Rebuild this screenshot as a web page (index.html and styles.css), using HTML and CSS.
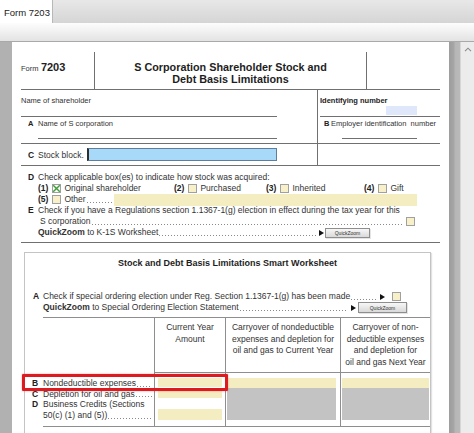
FILE: index.html
```html
<!DOCTYPE html>
<html>
<head>
<meta charset="utf-8">
<title>Form 7203</title>
<link rel="stylesheet" href="styles.css">
</head>
<body>
<div class="app">
  <div class="tabbar"><div class="tab">Form 7203</div></div>
  <div class="band"></div>
  <div class="main">
    <div class="lstrip"></div>
    <div class="page">
      <div class="hdr">
        <div class="hdr-form"><span class="hdr-small">Form</span> <span class="hdr-num">7203</span></div>
        <div class="hdr-title">S Corporation Shareholder Stock and<br>Debt Basis Limitations</div>
        <div class="hdr-right"></div>
      </div>
      <div class="sec1">
        <div class="s1-left">
          <div class="f-name">Name of shareholder</div>
          <div class="f-corp">
            <div class="lbl"><span class="ltr">A</span>Name of S corporation</div>
            <div class="uline corp-line"></div>
          </div>
        </div>
        <div class="s1-right">
          <div class="f-id"><b>Identifying number</b><span class="idfield"></span></div>
          <div class="f-ein">
            <div class="lbl"><span class="ltr ltr-b">B</span>Employer identification&nbsp; number</div>
            <div class="uline ein-line"></div>
          </div>
        </div>
      </div>
      <div class="sec2">
        <div class="s2-left"><span class="ltr">C</span><span class="stock-lbl">Stock block.</span><span class="stockfield"></span></div>
        <div class="s2-right"></div>
      </div>
      <div class="sec3">
        <div class="row ind1"><span class="ltr">D</span>Check applicable box(es) to indicate how stock was acquired:</div>
        <div class="row ind2">
          <div class="opt opt1"><b>(1)</b><span class="cb cb-x"><svg width="9" height="9" viewBox="0 0 9 9"><path d="M1.2 1.2 L7.8 7.8 M7.8 1.2 L1.2 7.8" stroke="#3d9e3d" stroke-width="1.4" fill="none"/></svg></span>Original shareholder</div>
          <div class="opt opt2"><b>(2)</b><span class="cb"></span>Purchased</div>
          <div class="opt opt3"><b>(3)</b><span class="cb"></span>Inherited</div>
          <div class="opt"><b>(4)</b><span class="cb"></span>Gift</div>
        </div>
        <div class="row ind2">
          <div class="opt opt5"><b>(5)</b><span class="cb"></span>Other<span class="dots"></span></div>
          <span class="yfield other-field"></span>
        </div>
        <div class="row ind1"><span class="ltr">E</span>Check if you have a Regulations section 1.1367-1(g) election in effect during the tax year for this</div>
        <div class="row ind3">S corporation<span class="dots"></span><span class="cb cb-e"></span></div>
        <div class="row ind2"><b>QuickZoom</b>&nbsp;to K-1S Worksheet<span class="dots"></span><span class="arrow"></span><span class="qbtn qbtn1">QuickZoom</span></div>
      </div>
      <div class="ws">
        <div class="ws-title">Stock and Debt Basis Limitations Smart Worksheet</div>
        <div class="row ws-a"><span class="ltr">A</span>Check if special ordering election under Reg. Section 1.1367-1(g) has been made<span class="dots"></span><span class="arrow"></span><span class="cb cb-a"></span></div>
        <div class="row ws-q"><b>QuickZoom</b>&nbsp;to Special Ordering Election Statement<span class="dots"></span><span class="arrow"></span><span class="qbtn qbtn2">QuickZoom</span></div>
        <div class="tbl">
          <div class="th th0"></div>
          <div class="th">Current Year<br>Amount</div>
          <div class="th">Carryover of nondeductible<br>expenses and depletion for<br>oil and gas to Current Year</div>
          <div class="th">Carryover of non-<br>deductible expenses<br>and depletion for<br>oil and gas Next Year</div>
          <div class="td td0">
            <div class="trow"><span class="ltr ltr-neg">B</span>Nondeductible expenses<span class="dots"></span></div>
            <div class="trow"><span class="ltr ltr-neg">C</span>Depletion for oil and gas<span class="dots"></span></div>
            <div class="trow"><span class="ltr ltr-neg">D</span>Business Credits (Sections</div>
            <div class="trow">50(c) (1) and (5))<span class="dots"></span></div>
          </div>
          <div class="td td1"><span class="yf yf-b"></span><span class="yf yf-c"></span><span class="yf yf-d"></span></div>
          <div class="td td2"><span class="yf yf-top"></span><span class="gray"></span></div>
          <div class="td td3"><span class="yf yf-top"></span><span class="gray"></span></div>
        </div>
      </div>
    </div>
    <div class="rgray"></div>
    <div class="scroll"><svg class="uparrow" width="8" height="5" viewBox="0 0 8 5"><polyline points="1,4.2 4,1.2 7,4.2" fill="none" stroke="#8a8a8a" stroke-width="1.1"/></svg></div>
  </div>
  <div class="redbox"></div>
</div>
</body>
</html>
```

FILE: styles.css
```css
* { box-sizing: border-box; margin: 0; padding: 0; }
html, body { width: 474px; height: 433px; overflow: hidden; background: #fff; }
body { font-family: "Liberation Sans", Arial, sans-serif; font-size: 8.5px; color: #333; }

.app { position: relative; width: 474px; height: 433px; display: flex; flex-direction: column; overflow: hidden; }

.tabbar { height: 23px; flex: none; display: flex; background: linear-gradient(#e8e8e8, #d5d5d5); }
.tab { width: 53px; background: #fff; border-right: 1px solid #b8b8b8; font-size: 9.5px; line-height: 25px; padding-left: 4px; color: #1a1a1a; white-space: nowrap; }
.band { height: 19px; flex: none; background: linear-gradient(#fdfdfd, #e3e3e3); border-bottom: 1px solid #a9a9a9; }

.main { flex: 1; display: flex; min-height: 0; }
.lstrip { width: 12px; flex: none; background: #b1b1b1; }
.page { width: 437px; flex: none; background: #fff; padding: 10px 9px 0; }
.rgray { width: 11px; flex: none; background: linear-gradient(to right, #9d9d9d 0, #a6a6a6 5px, #b6b6b6 6px, #b9b9b9 100%); }
.scroll { width: 14px; flex: none; background: #ececec; border-left: 1px solid #d6d6d6; display: flex; justify-content: center; align-items: flex-start; padding-top: 5px; }

/* header */
.hdr { display: flex; height: 38px; border-bottom: 1px solid #707070; }
.hdr-form { width: 74px; border-right: 1px solid #707070; padding-top: 8px; line-height: 14px; white-space: nowrap; }
.hdr-small { font-size: 7.5px; }
.hdr-num { font-size: 11px; font-weight: bold; color: #1e1e1e; }
.hdr-title { width: 272px; border-right: 1px solid #707070; text-align: center; font-weight: bold; font-size: 10.8px; line-height: 12px; padding-top: 9px; color: #1e1e1e; white-space: nowrap; }
.hdr-right { flex: 1; }

.ltr { display: inline-block; width: 10px; font-weight: bold; flex: none; color: #222; }

/* section 1 */
.sec1 { display: flex; height: 54px; border-bottom: 1px solid #707070; }
.s1-left { width: 297px; border-right: 1px solid #707070; }
.f-name { width: 256px; height: 27px; border-bottom: 1px solid #707070; font-size: 7.5px; line-height: 10px; padding-top: 6px; }
.f-corp, .f-ein { padding-top: 1px; font-size: 7.5px; }
.lbl { line-height: 11px; height: 11px; display: flex; align-items: center; white-space: nowrap; }
.f-corp .lbl { padding-left: 7px; }
.uline { height: 1px; background: #707070; margin-top: 9px; }
.corp-line { margin-left: 17px; width: 239px; }
.s1-right { flex: 1; }
.f-id { height: 27px; margin-left: 2px; border-bottom: 1px solid #707070; padding-top: 6px; display: flex; flex-direction: column; }
.f-id b { font-size: 7.5px; line-height: 10px; white-space: nowrap; color: #222; }
.idfield { align-self: flex-end; margin-right: 23px; width: 31px; height: 9px; background: #dfe8fb; }
.f-ein .lbl { padding-left: 6px; }
.ltr-b { width: 7px; }
.ein-line { margin-left: 24px; width: 75px; }

/* section 2 */
.sec2 { display: flex; height: 22px; border-bottom: 1px solid #707070; }
.s2-left { width: 297px; border-right: 1px solid #707070; display: flex; align-items: center; padding-left: 7px; white-space: nowrap; }
.stock-lbl { width: 49px; flex: none; }
.stockfield { width: 190px; height: 13px; background: #a9d9f9; border: 1px solid #5f7e9e; border-left: 2px solid #2e2e2e; }
.s2-right { flex: 1; }

/* section 3 */
.sec3 { height: 77px; border-bottom: 1px solid #707070; padding-top: 6px; }
.row { height: 11px; line-height: 11px; display: flex; align-items: center; white-space: nowrap; }
.ind1 { padding-left: 7px; }
.ind2 { padding-left: 17px; }
.ind3 { padding-left: 19px; }
.opt { display: flex; align-items: center; flex: none; }
.opt b { color: #222; }
.opt1 { width: 136px; }
.opt2 { width: 92px; }
.opt3 { width: 98px; }
.opt5 { width: 76px; align-self: stretch; }
.cb { display: inline-block; flex: none; width: 9px; height: 9px; border: 1px solid #a0a0a0; background: #f7f0c9; margin: 0 3px 0 4px; }
.cb-x { background: #fbfbf3; }
.cb-x svg { display: block; margin: -1px 0 0 -1px; }
.yfield { display: block; flex: none; height: 12px; background: #f5edc2; }
.other-field { width: 303px; }
.cb-e { margin: 0 25px 0 2px; }

.dots { flex: 1; align-self: flex-end; height: 1px; margin: 0 2px 2px 1px; background-image: linear-gradient(to right, #8a8a8a 1px, transparent 1px); background-size: 3px 1px; background-repeat: repeat-x; }
.arrow { flex: none; width: 0; height: 0; border-left: 5px solid #111; border-top: 3px solid transparent; border-bottom: 3px solid transparent; margin: 0 1px 0 1px; }
.qbtn { flex: none; display: flex; align-items: center; justify-content: center; height: 10px; font-size: 5px; line-height: 8px; color: #333; background: linear-gradient(#f7f7f7, #d9d9d9); border: 1px solid #8e8e8e; box-shadow: 1px 1px 0 #e4e4e4; }
.qbtn1 { width: 45px; margin-right: 70px; }

/* worksheet */
.ws { margin: 9px 9px 0 3px; height: 200px; border: 1px solid #c4c4c4; box-shadow: 1px 1px 1px #e2e2e2; }
.ws-title { padding-top: 4px; line-height: 12px; font-size: 9px; font-weight: bold; text-align: center; color: #1e1e1e; white-space: nowrap; }
.ws-a { margin-top: 22px; padding-left: 8px; }
.cb-a { margin: 0 29px 0 6px; }
.ws-q { padding-left: 18px; }
.qbtn2 { width: 49px; height: 11px; margin: 0 23px 0 1px; }

.tbl { display: grid; grid-template-columns: 111px 71px 115px 90px; margin: 4px 0 0 18px; border-top: 1px solid #8e8e8e; border-bottom: 1px solid #8e8e8e; }
.th { height: 55px; border-left: 1px solid #8e8e8e; border-bottom: 1px solid #8e8e8e; text-align: center; line-height: 11.6px; padding-top: 4px; white-space: nowrap; color: #333; }
.th0 { border-left: none; border-bottom: none; }
.td { height: 53px; border-left: 1px solid #8e8e8e; }
.td0 { border-left: none; padding-top: 5px; }
.trow { height: 10.7px; line-height: 10.7px; display: flex; align-items: center; white-space: nowrap; }
.ltr-neg { margin-left: -11px; width: 11px; }
.yf { display: block; background: #f5edc2; }
.yf-b { margin: 5px 0 0 3px; width: 64px; height: 9px; }
.yf-c { margin: 3px 0 0 3px; width: 64px; height: 8px; }
.yf-d { margin: 11px 0 0 3px; width: 64px; height: 11px; }
.td2 .yf-top { margin: 5px 0 0 1px; width: 109px; height: 10px; }
.td3 .yf-top { margin: 5px 0 0 1px; width: 87px; height: 10px; }
.gray { display: block; height: 32px; background: #c3c3c3; }
.td2 .gray { margin-left: 1px; width: 109px; }
.td3 .gray { margin-left: 1px; width: 87px; }

.redbox { position: absolute; left: 22px; top: 374px; width: 206px; height: 17px; border: 3px solid #dd1a20; border-radius: 1px; box-shadow: 0 0 2px rgba(220, 20, 30, 0.45); }
```
